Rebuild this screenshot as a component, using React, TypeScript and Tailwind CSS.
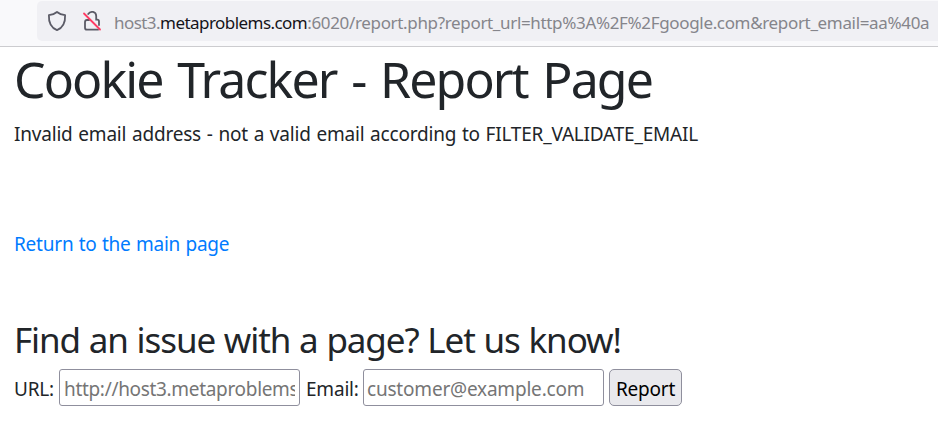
import React from "react";

export default function App() {
  return (
    <div className="h-[421px] w-[938px] overflow-hidden bg-white font-['Noto_Sans',sans-serif] text-[#212529]">
      <header className="flex h-[47px] border-b border-[#cccccf] bg-[#f9f9fb] pt-px pl-[37px]">
        <div className="flex h-10 w-full items-center rounded-l-[5px] bg-[#f0f0f4]">
          <svg className="ml-[9px] h-[22px] w-[22px] shrink-0" viewBox="0 0 22 22" fill="none" stroke="#5b5b66" strokeWidth="1.8" strokeLinejoin="round">
            <path d="M11 2C13.2 3.9 15.8 4.8 19.1 5.1C19.4 11.5 17.1 17.7 11 20.2C4.9 17.7 2.6 11.5 2.9 5.1C6.2 4.8 8.8 3.9 11 2Z" />
          </svg>
          <svg className="ml-[13px] h-[22px] w-[22px] shrink-0" viewBox="0 0 22 22" fill="none" strokeLinecap="round">
            <path d="M7.2 4C9.5.2 15.2 1.7 15.2 6V9.7H16.3Q18 9.7 18 11.4V15M8.1 10H6Q4 10 4 12V17.7Q4 19.7 6 19.7H17" stroke="#5b5b66" strokeWidth="1.8" />
            <path d="M3 3.5L19 19.5" stroke="#ff3b63" strokeWidth="1.8" />
          </svg>
          <div className="mt-[3px] ml-[11px] text-[17px] leading-[22px] tracking-[-0.34px] whitespace-nowrap text-[#85858b]">
            <span className="tracking-[-0.55px]">host3.<span className="text-[#15141a]">metaproblems.com</span></span>:6020/report.php?report_url=http%3A%2F%2Fgoogle.com&amp;report_email=aa%40a
          </div>
        </div>
      </header>
      <main className="px-[14px]">
        <h1 className="h-[72px] text-[50px] leading-[65px] tracking-[-1.9px] whitespace-nowrap [word-spacing:3.6px]">Cookie Tracker - Report Page</h1>
        <p className="h-[110px] text-[19px] leading-[30px] tracking-[-0.2px] whitespace-nowrap [word-spacing:1px]">Invalid email address - not a valid email according to FILTER_VALIDATE_EMAIL</p>
        <a className="block h-[90px] text-[19px] leading-[30px] tracking-[-0.22px] text-[#007bff] [word-spacing:0.6px]">Return to the main page</a>
        <h2 className="h-[50px] text-[35px] leading-[42px] tracking-[-1.1px] [word-spacing:0.8px]">Find an issue with a page? Let us know!</h2>
        <form className="flex items-center text-[19px] tracking-[-0.2px]">
          <label className="w-[45px] pt-1" htmlFor="url">URL:</label>
          <input id="url" className="h-[37px] w-[241px] rounded-[3px] border border-[#8f8f9d] px-1 pt-[3px] tracking-[-0.32px] placeholder:text-[#757575]" placeholder="http://host3.metaproblems.com" />
          <label className="ml-[6px] w-[57px] pt-1" htmlFor="email">Email:</label>
          <input id="email" className="h-[37px] w-[241px] rounded-[3px] border border-[#8f8f9d] px-[3px] pt-[3px] placeholder:text-[#757575]" placeholder="customer@example.com" />
          <button type="button" className="ml-[5px] h-[37px] w-[73px] rounded-[5px] border border-[#8f8f9d] bg-[#e9e9ed] pt-1 text-black">Report</button>
        </form>
      </main>
    </div>
  );
}
